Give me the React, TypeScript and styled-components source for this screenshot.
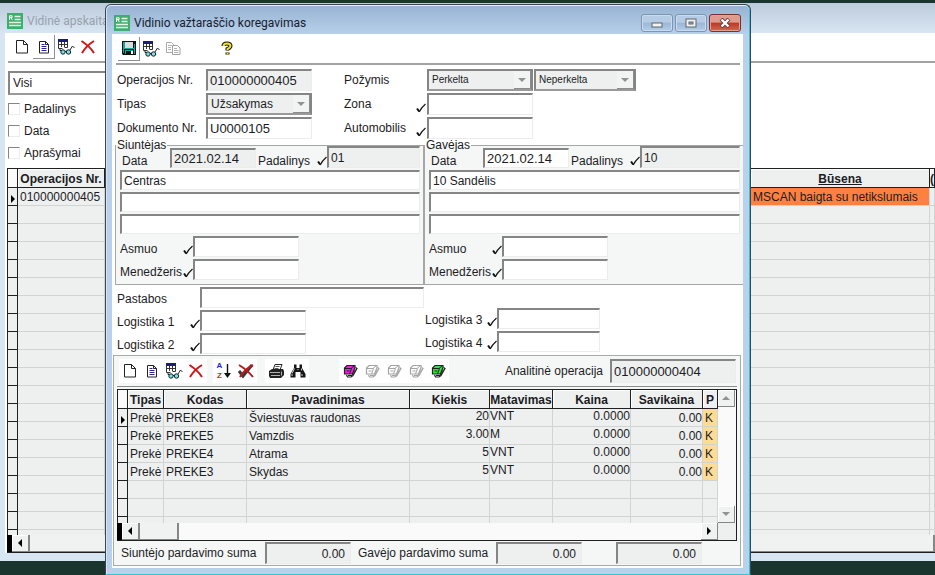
import React from "react";
import styled, { createGlobalStyle, css } from "styled-components";

const GlobalStyle = createGlobalStyle`
  *, *::before, *::after { box-sizing: border-box; }
  body {
    margin: 0;
    background: #1a352e;
    color: #1c1c24;
    font: 12px/14px "Liberation Sans", Arial, sans-serif;
  }
  button, input, select { font: inherit; color: inherit; }
`;

/* ---------- shell ---------- */

const Desktop = styled.div`
  position: relative;
  display: flex;
  flex-direction: column;
  height: 100vh;
  padding: 3px 0 14px;
  overflow: hidden;
`;

const BackWindow = styled.section`
  flex: 1;
  min-height: 0;
  display: flex;
  flex-direction: column;
  padding: 0 0 8px 5px;
  background: #d8e5f3;
`;

const FrontWindow = styled.section`
  position: absolute;
  top: 4px;
  left: 105px;
  right: 184px;
  bottom: 0;
  display: flex;
  flex-direction: column;
  padding: 0 7px 6px 6px;
  background: #b9d1ea;
  border: 1px solid #3c4650;
  border-bottom-color: #38c0dc;
  border-radius: 6px 6px 0 0;
  box-shadow: inset -1px 0 #38c0dc, inset 0 1px #e6eef7, inset 1px 0 #d6e4f2;
`;

const TitleBar = styled.header<{ $active?: boolean }>`
  display: flex;
  align-items: center;
  flex: none;
  gap: 4px;
  height: ${(p) => (p.$active ? 28 : 30)}px;
  color: ${(p) => (p.$active ? "#15202e" : "#98a2ad")};
  ${(p) =>
    p.$active
      ? css`
          margin: 1px -6px 0 -5px;
          padding: 6px 8px 0 7px;
          background: linear-gradient(#98b4d3, #b7cfe9);
          border-radius: 5px 5px 0 0;
        `
      : css`
          margin-left: -5px;
          padding: 6px 2px 0 7px;
          background: linear-gradient(#bccbdb, #d8e5f3);
        `}
`;

const Title = styled.h1`
  flex: 1;
  margin: 0;
  font: 12px/16px Roboto, "Open Sans", sans-serif;
  white-space: nowrap;
`;

const WindowButtons = styled.div`
  display: flex;
  gap: 2px;
`;

const WindowButton = styled.button<{ $close?: boolean }>`
  display: grid;
  place-items: center;
  width: 32px;
  height: 18px;
  padding: 0;
  border: 1px solid ${(p) => (p.$close ? "#7c2f2c" : "#7d95b0")};
  border-radius: 3px;
  box-shadow: inset 0 0 0 1px ${(p) => (p.$close ? "#e2a096" : "#c9dcf0")};
  background: ${(p) =>
    p.$close
      ? "linear-gradient(#df9b8e 45%, #bb3a22 50%, #cd6a50)"
      : "linear-gradient(#b6cce4 45%, #9bb7d6 50%, #b4cde8)"};
`;

const Client = styled.div`
  flex: 1;
  min-height: 0;
  display: flex;
  flex-direction: column;
  background: #fff;
`;

/* ---------- toolbars ---------- */

const Toolbar = styled.div`
  display: flex;
  align-items: center;
  flex: none;
  height: 31px;
  margin: 0 3px 0 4px;
  padding-left: 2px;
  border-bottom: 2px solid #a3a3a3;
`;

const BackToolbar = styled(Toolbar)`
  height: 30px;
  margin: 0 0 0 3px;
  padding-left: 3px;
`;

const ToolButton = styled.button<{ $raised?: boolean }>`
  display: grid;
  place-items: center;
  width: 22px;
  height: 24px;
  padding: 0;
  border: 0 solid #8f8f8f;
  border-width: ${(p) => (p.$raised ? "0 1px 1px 0" : "0")};
  background: none;
`;

const Gap = styled.span`
  width: 32px;
`;

/* ---------- controls ---------- */

const sunken = css`
  border: 1px solid #ececec;
  border-top: 2px solid #858585;
  border-left: 2px solid #858585;
`;

const Field = styled.input<{ $right?: boolean; $code?: boolean }>`
  ${sunken}
  width: 100%;
  min-width: 0;
  height: 100%;
  padding: 0 5px 0 2px;
  border-radius: 0;
  outline: 0;
  background: #fff;
  font-size: ${(p) => (p.$code ? 13 : 12)}px;
  text-align: ${(p) => (p.$right ? "right" : "left")};
  &:read-only { background: #eef0f0; }
`;

const SelectFrame = styled.span<{ $small?: boolean; $plain?: boolean }>`
  display: grid;
  grid-template-columns: 1fr 17px;
  height: 100%;
  border: 2px solid #858585;
  border-right-width: ${(p) => (p.$plain ? 0 : 2)}px;
  border-bottom-color: #9a9a9a;
  background: ${(p) => (p.$plain ? "#fff" : "#eef0f0")};
  font-size: ${(p) => (p.$small ? 10 : 12)}px;
  select {
    grid-area: 1 / 1 / 2 / 3;
    min-width: 0;
    padding: 0 3px;
    border: 0;
    appearance: none;
    background: none;
    opacity: 1;
    color: inherit;
  }
`;

const SelectArrow = styled.span`
  grid-area: 1 / 2;
  display: grid;
  place-items: center;
  border-right: 1px solid #8c8c8c;
  border-bottom: 1px solid #8c8c8c;
  background: #f2f3f3;
  pointer-events: none;
`;

const LookupButton = styled.button`
  display: grid;
  place-items: end center;
  height: 100%;
  padding: 0 0 2px;
  border: 0;
  background: none;
`;

const Label = styled.label`
  align-self: center;
  white-space: nowrap;
`;

function Tri({ dir, color = "#000" }: { dir: "up" | "down" | "left" | "right"; color?: string }) {
  const d = {
    up: "M0 6h8L4 2z",
    down: "M0 2h8L4 6z",
    left: "M6 0v8L2 4z",
    right: "M2 0v8l4-4z",
  }[dir];
  return (
    <svg width="8" height="8" viewBox="0 0 8 8" aria-hidden="true">
      <path d={d} fill={color} />
    </svg>
  );
}

function Choice({ id, value, small, label }: { id?: string; value: string; small?: boolean; label?: string }) {
  return (
    <SelectFrame $small={small}>
      <select id={id} aria-label={label} disabled defaultValue={value}>
        <option>{value}</option>
      </select>
      <SelectArrow>
        <Tri dir="down" color="#929292" />
      </SelectArrow>
    </SelectFrame>
  );
}

function Lookup({ label }: { label: string }) {
  return (
    <LookupButton type="button" aria-label={label}>
      <svg width="10" height="10" viewBox="0 0 10 10" aria-hidden="true">
        <path d="M1 5.5 3.2 8.5" stroke="#111" strokeWidth="2" fill="none" />
        <path d="M3.2 9 Q5 5 9.5 1" stroke="#111" strokeWidth="1.1" fill="none" />
      </svg>
    </LookupButton>
  );
}

/* ---------- document form ---------- */

const HeaderForm = styled.div`
  display: grid;
  grid-template-columns: 89px 106px 32px 72px 11px 106px 103px;
  grid-auto-rows: 22px;
  row-gap: 2px;
  padding: 4px 0 0 5px;
`;

const Cell = styled.div<{ $col: number; $pad?: number }>`
  grid-column: ${(p) => p.$col};
  padding-left: ${(p) => p.$pad || 0}px;
`;

const ColLabel = styled(Label)<{ $col: number }>`
  grid-column: ${(p) => p.$col};
`;

const Parties = styled.div`
  display: grid;
  grid-template-columns: 309fr 319fr;
  padding-left: 3px;
`;

const Party = styled.fieldset<{ $last?: boolean }>`
  min-width: 0;
  margin: 0;
  padding: 0 3px 4px 4px;
  border: 1px solid #a6a6a6;
  border-right-width: ${(p) => (p.$last ? 0 : 1)}px;
  background: #f5f7f7;
  legend {
    height: 12px;
    margin-left: -4px;
    padding: 0 1px;
    line-height: 12px;
  }
`;

const PartyRows = styled.div`
  display: grid;
  grid-template-rows: 22px repeat(3, 20px) 21px 21px;
  row-gap: 2px;
  margin-top: -5px;
`;

const PartyHead = styled.div<{ $lead: number }>`
  display: grid;
  grid-template-columns: ${(p) => p.$lead}px 86px 60px 11px 1fr;
  & > label { padding: 7px 0 0 2px; }
`;

const DateSlot = styled.div`
  padding-top: 2px;
`;

const PersonRow = styled.div`
  display: grid;
  grid-template-columns: 62px 11px 106px;
  label { padding-top: 4px; }
`;

const Notes = styled.div`
  display: grid;
  grid-template-columns: 308px 1fr;
  padding: 2px 0 1px 5px;
`;

const NoteColumn = styled.div<{ $end?: boolean }>`
  display: flex;
  flex-direction: column;
  justify-content: flex-end;
  gap: 2px;
  padding-bottom: ${(p) => (p.$end ? 2 : 0)}px;
`;

const NoteRow = styled.div<{ $cols: string }>`
  display: grid;
  grid-template-columns: ${(p) => p.$cols};
  height: 21px;
  label { padding-top: 2px; }
`;

/* ---------- lines panel ---------- */

const Panel = styled.div`
  flex: 1;
  min-height: 0;
  display: flex;
  flex-direction: column;
  margin: 0 2px 2px 1px;
  padding: 0 3px;
  border: 1px solid #a9a9a9;
  background: #f5f7f7;
`;

const PanelToolbar = styled.div`
  display: flex;
  align-items: center;
  flex: none;
  height: 31px;
  border-bottom: 1px solid #8c8c8c;
`;

const Strip = styled.div<{ $after: number }>`
  display: flex;
  margin: 0 ${(p) => p.$after}px 0 2px;
  background: #fff;
`;

const AnalyticField = styled.div`
  width: 126px;
  height: 24px;
  margin: 0 1px 0 7px;
`;

const Spacer = styled.span`
  flex: 1;
`;

const GridBox = styled.div`
  flex: 1;
  min-height: 0;
  display: grid;
  grid-template-columns: 1fr 18px;
  grid-template-rows: 1fr 17px;
  margin-top: 2px;
  border: solid #202020;
  border-width: 1px 1px 1px 0;
  background: #eef0f0;
`;

const Clip = styled.div`
  min-height: 0;
  min-width: 0;
  overflow: hidden;
`;

const Grid = styled.table`
  width: 100%;
  table-layout: fixed;
  border-collapse: separate;
  border-spacing: 0;
  background: #eef0f0;
  white-space: nowrap;
`;

const Row = styled.tr`
  height: 18px;
`;

const Th = styled.th<{ $underline?: boolean; $align?: string }>`
  height: 19px;
  padding: 1px 0 0;
  overflow: hidden;
  border-right: 1px solid #202020;
  border-bottom: 1px solid #202020;
  box-shadow: inset 1px 1px #fff;
  line-height: 16px;
  text-align: ${(p) => p.$align || "center"};
  text-decoration: ${(p) => (p.$underline ? "underline" : "none")};
`;

const Td = styled.td<{ $right?: boolean; $raised?: boolean; $fill?: string }>`
  height: 18px;
  padding: ${(p) => (p.$raised ? "0 0 3px" : "2px 0 1px 2px")};
  overflow: hidden;
  border-right: 1px solid #d2d4d4;
  border-bottom: 1px solid #d2d4d4;
  background: ${(p) => p.$fill || "none"};
  text-align: ${(p) => (p.$right ? "right" : "left")};
`;

const Marker = styled.td`
  height: 18px;
  padding: 4px 0 0;
  border: solid #202020;
  border-width: 0 1px 1px 1px;
  line-height: 8px;
  text-align: right;
`;

const MarkerHead = styled.th`
  padding: 0;
  border: solid #202020;
  border-width: 0 1px 1px 1px;
  background: #fafafa;
`;

const ScrollV = styled.div`
  display: flex;
  flex-direction: column;
  justify-content: space-between;
  background: #fafafa;
`;

const ScrollH = styled.div`
  grid-column: 1;
  display: flex;
  flex: none;
  height: 17px;
  border-left: 5px solid #000;
  background: #fafafa;
`;

const ScrollButton = styled.button`
  display: grid;
  place-items: center;
  flex: none;
  width: 17px;
  height: 17px;
  padding: 0;
  border: solid #868686;
  border-width: 0 1px 1px 0;
  box-shadow: inset 1px 1px #fff;
  background: #f0f1f1;
`;

const Thumb = styled.span<{ $fill?: boolean }>`
  flex: ${(p) => (p.$fill ? "1" : "0 0 40px")};
  border: solid #868686;
  border-width: 0 2px 1px 1px;
  background: #f0f1f1;
`;

const Totals = styled.div`
  display: grid;
  grid-template-columns: 144px 86px 7px 138px 86px 34px 86px;
  grid-template-rows: 22px;
  flex: none;
  height: 24px;
  padding: 1px 0 0 4px;
`;

/* ---------- back window ---------- */

const Filters = styled.div`
  display: flex;
  flex-direction: column;
  width: 220px;
  padding: 8px 0 0 3px;
`;

const FilterCombo = styled.div`
  height: 24px;
  margin-bottom: 3px;
`;

const CheckLine = styled.label`
  display: flex;
  align-items: center;
  gap: 4px;
  height: 22px;
  input {
    ${sunken}
    width: 12px;
    height: 12px;
    margin: 0;
    appearance: none;
    background: #fff;
    border-width: 1px;
  }
`;

const BackGrid = styled.div`
  flex: 1;
  min-height: 0;
  display: flex;
  flex-direction: column;
  margin: 4px 0 0 2px;
  border: solid #202020;
  border-width: 1px 0 1px;
  background: #eef0f0;
`;

const BackClip = styled(Clip)`
  flex: 1;
`;

/* ---------- icons ---------- */

function AppIcon() {
  return (
    <svg width="16" height="16" viewBox="0 0 16 16" aria-hidden="true">
      <rect width="16" height="16" fill="#3fae6b" />
      <path d="M2.5 7V2.8h2.6v1.9H2.5m1.3 0L5.4 7" stroke="#fff" fill="none" />
      <path d="M7.5 3.5h6M7.5 6.5h6M2 9.5h12M2 12.5h12" stroke="#e4f6ea" strokeWidth="1.3" />
    </svg>
  );
}

const I = ({ w = 16, children }: { w?: number; children: React.ReactNode }) => (
  <svg width={w} height="16" viewBox={`0 0 ${w} 16`} fill="none" aria-hidden="true">
    {children}
  </svg>
);

const NewIcon = () => (
  <I>
    <path d="M2.5 1.5h7l4 4v8.500h-11z" fill="#fff" stroke="#222" />
    <path d="M9.5 1.5v4h4" stroke="#222" />
  </I>
);
const ListIcon = () => (
  <I>
    <path d="M3.5 2.5h6l3 3v8.500h-9z" fill="#fff" stroke="#222" />
    <path d="M9.500 2.500v3h3" stroke="#222" />
    <path d="M5.500 5.500h3M5.500 7.500h5M5.500 9.500h5M5.500 11.500h5" stroke="#26269a" />
  </I>
);
const ViewIcon = () => (
  <I w={18}>
    <rect x="1" y="0" width="10" height="3" fill="#1c1c78" />
    <path d="M1.500 3v6.500h4M10.500 3v5.500h-3M1.500 5.500h9M4.500 3v5M7.500 3v5" stroke="#333" />
    <path d="M3 10v1.500h2" stroke="#222" />
    <circle cx="6" cy="13" r="2.200" fill="#7fe0dc" stroke="#123" />
    <circle cx="11.500" cy="13" r="2.200" fill="#7fe0dc" stroke="#123" />
    <path d="M8 12.500h1.500M13 11l2.500-4 2 2" stroke="#222" />
  </I>
);
const DeleteIcon = () => (
  <I>
    <path d="M1.500 2C6 5 11 9 14 14M14 2C9 5 5 9 2 14" stroke="#cf1518" strokeWidth="2" />
  </I>
);
const SaveIcon = () => (
  <I>
    <path d="M1 1h14v14H2l-1-1z" fill="#111" />
    <path d="M2 2h2v6H2zM13 4h1v10h-1zM2 8h11v1H2zM2 9h1v4H2z" fill="#17a6a6" />
    <rect x="4" y="2" width="8" height="6" fill="#d9dcdc" />
    <rect x="4" y="10" width="8" height="4" fill="#17a6a6" />
    <rect x="5" y="11" width="5" height="4" fill="#111" />
    <rect x="10" y="11" width="2" height="3" fill="#fff" />
  </I>
);
const CopyIcon = () => (
  <I>
    <path d="M1.500 1.500h5l2 2v8h-7z" fill="#fff" stroke="#a9a9a9" />
    <path d="M3 4.500h4M3 6.500h3M3 8.500h3" stroke="#b5b5b5" />
    <path d="M7.500 4.500h5l2.500 2.500v6.500H7.500z" fill="#fff" stroke="#a0a0a0" />
    <path d="M9 7.500h3M9 9.500h4.500M9 11.500h4.500" stroke="#b0b0b0" />
  </I>
);
const HelpIcon = () => (
  <I>
    <path d="M4.500 5Q4.500 2.500 8 2.500T11.500 5Q11.500 6.500 8.500 8V9.500M8.500 11.500v2" stroke="#111" strokeWidth="4" />
    <path d="M4.500 5.200Q4.500 2.500 8 2.500T11.500 5Q11.500 6.500 8.500 8V9M8.500 11.700v1.600" stroke="#f2e61a" strokeWidth="2" />
  </I>
);
const SortGlyph = styled.span`
  display: flex;
  align-items: center;
  font: bold 8px/10px "Liberation Sans", Arial, sans-serif;
  b { display: block; color: #2424dc; }
  b + b { color: #d81a1a; }
`;
const SortIcon = () => (
  <SortGlyph>
    <span>
      <b>A</b>
      <b>Z</b>
    </span>
    <I w={9}>
      <path d="M5.500 1v12" stroke="#111" strokeWidth="1.400" />
      <path d="M2 10h7l-3.500 5z" fill="#111" />
    </I>
  </SortGlyph>
);
const FilterOffIcon = () => (
  <I>
    <path d="M1 8l4 5L14 2" stroke="#3a3a3a" strokeWidth="3" />
    <path d="M1 2C6 5 11 9 15 14M15 2C9 5 5 9 2 14" stroke="#b81a1c" strokeWidth="2" />
  </I>
);
const PrintIcon = () => (
  <I>
    <path d="M5 7l2-5.500h7L12 7z" fill="#fff" stroke="#222" />
    <path d="M7.500 3.500h4M6.500 5.500h4" stroke="#555" />
    <path d="M1 8l3-2h11l1 2v4l-3 3H2l-1-2z" fill="#222" />
    <path d="M2 9.500h10M3 12.500h9M13.500 8.500v4" stroke="#b5b5b5" />
  </I>
);
const FindIcon = () => (
  <I>
    <path d="M4 1.500h2.500V5H9.500V1.500H12V5l3.500 6v3.500h-5V9h-5v5.500h-5V11L4 5z" fill="#151515" />
    <path d="M4.500 5.500L2 10.500M11.500 5.500v2M2 11v2M12 11v2M7.500 6.500h1" stroke="#ccc" />
  </I>
);
const BookIcon = ({ fill, line = "#222" }: { fill: string; line?: string }) => (
  <I>
    <path d="M5 2.500h8v2l-2.500 6.500h-8V5z" fill={fill} stroke={line} strokeWidth="1.200" />
    <path d="M2.500 5.500H9l3-2.500M9.500 5.500L7.500 11M4.500 8h3" stroke={line} />
    <path d="M13.500 4.500l1.500 1-4 7-2 1.500H5.500l-1-2" stroke={line} strokeWidth="1.200" />
    <path d="M6 12.500h4l3.500-6" stroke={line} />
  </I>
);

/* ---------- data ---------- */

const lines = [
  ["PREKE8", "Šviestuvas raudonas", "20", "VNT"],
  ["PREKE5", "Vamzdis", "3.00", "M"],
  ["PREKE4", "Atrama", "5", "VNT"],
  ["PREKE3", "Skydas", "5", "VNT"],
];

const grey = "#a5a5a5";

function Tool({ label, raised, children }: { label: string; raised?: boolean; children: React.ReactNode }) {
  return (
    <ToolButton type="button" aria-label={label} title={label} $raised={raised}>
      {children}
    </ToolButton>
  );
}

function PartyBox(props: {
  id: string;
  name: string;
  unit: string;
  title: string;
  lead: number;
  lockedDate?: boolean;
  last?: boolean;
}) {
  const { id, name, unit, title, lead, lockedDate, last } = props;
  return (
    <Party $last={last}>
      <legend>{name}</legend>
      <PartyRows>
        <PartyHead $lead={lead}>
          <Label htmlFor={id + "date"}>Data</Label>
          <DateSlot>
            <Field id={id + "date"} $code defaultValue="2021.02.14" readOnly={lockedDate} />
          </DateSlot>
          <Label htmlFor={id + "unit"}>Padalinys</Label>
          <Lookup label="Pasirinkti padalinį" />
          <Field id={id + "unit"} defaultValue={unit} readOnly />
        </PartyHead>
        <Field aria-label={name + " 1"} defaultValue={title} />
        <Field aria-label={name + " 2"} />
        <Field aria-label={name + " 3"} />
        {["Asmuo", "Menedžeris"].map((t) => (
          <PersonRow key={t}>
            <Label htmlFor={id + t}>{t}</Label>
            <Lookup label={t} />
            <Field id={id + t} />
          </PersonRow>
        ))}
      </PartyRows>
    </Party>
  );
}

function Logistics({ n, cols }: { n: number; cols: string }) {
  return (
    <NoteRow $cols={cols}>
      <Label htmlFor={"log" + n}>Logistika {n}</Label>
      <Lookup label={"Logistika " + n} />
      <Field id={"log" + n} />
    </NoteRow>
  );
}

function JournalWindow() {
  return (
    <BackWindow>
      <TitleBar>
        <AppIcon />
        <Title as="h2">Vidinė apskaita</Title>
      </TitleBar>
      <Client>
        <BackToolbar>
          <Tool label="Naujas"><NewIcon /></Tool>
          <Tool label="Koreguoti" raised><ListIcon /></Tool>
          <Tool label="Peržiūra"><ViewIcon /></Tool>
          <Tool label="Trinti"><DeleteIcon /></Tool>
        </BackToolbar>
        <Filters>
          <FilterCombo>
            <SelectFrame $plain>
              <select aria-label="Filtras"><option>Visi</option></select>
            </SelectFrame>
          </FilterCombo>
          <CheckLine><input type="checkbox" />Padalinys</CheckLine>
          <CheckLine><input type="checkbox" />Data</CheckLine>
          <CheckLine><input type="checkbox" />Aprašymai</CheckLine>
        </Filters>
        <BackGrid>
          <BackClip>
            <Grid>
              <colgroup>
                <col width="11" />
                <col width="87" />
                <col />
                <col width="179" />
                <col width="5" />
              </colgroup>
              <thead>
                <Row>
                  <MarkerHead />
                  <Th>Operacijos Nr.</Th>
                  <Th />
                  <Th $underline>Būsena</Th>
                  <Th $align="left">(</Th>
                </Row>
              </thead>
              <tbody>
                {Array.from({ length: 20 }, (_, i) => (
                  <Row key={i}>
                    <Marker>{i === 0 && <Tri dir="right" />}</Marker>
                    <Td>{i === 0 && "010000000405"}</Td>
                    <Td />
                    <Td $fill={i === 0 ? "#ff8040" : undefined}>{i === 0 && "MSCAN baigta su netikslumais"}</Td>
                    <Td />
                  </Row>
                ))}
              </tbody>
            </Grid>
          </BackClip>
          <ScrollH>
            <ScrollButton type="button" aria-label="Kairėn"><Tri dir="left" /></ScrollButton>
            <Thumb $fill />
          </ScrollH>
        </BackGrid>
      </Client>
    </BackWindow>
  );
}

function WaybillWindow() {
  return (
    <FrontWindow>
      <TitleBar $active>
        <AppIcon />
        <Title>Vidinio važtaraščio koregavimas</Title>
        <WindowButtons>
          <WindowButton type="button" aria-label="Sumažinti">
            <svg width="12" height="10"><rect x="1" y="5" width="10" height="4" fill="#f2f2ee" stroke="#5c6672" /></svg>
          </WindowButton>
          <WindowButton type="button" aria-label="Padidinti">
            <svg width="12" height="10">
              <rect x="1" y="1" width="10" height="8" fill="#f2f2ee" stroke="#5c6672" />
              <rect x="4" y="4" width="4" height="2" fill="#8fb0d4" stroke="#5c6672" />
            </svg>
          </WindowButton>
          <WindowButton type="button" aria-label="Uždaryti" $close>
            <svg width="12" height="10">
              <path d="M2 1l8 8M10 1L2 9" stroke="#6b3a3a" strokeWidth="4" />
              <path d="M2.500 1.500l7 7M9.500 1.500l-7 7" stroke="#fff" strokeWidth="2.400" />
            </svg>
          </WindowButton>
        </WindowButtons>
      </TitleBar>
      <Client>
        <Toolbar>
          <Tool label="Išsaugoti" raised><SaveIcon /></Tool>
          <Tool label="Peržiūra"><ViewIcon /></Tool>
          <Tool label="Kopijuoti"><CopyIcon /></Tool>
          <Gap />
          <Tool label="Pagalba"><HelpIcon /></Tool>
        </Toolbar>
        <HeaderForm>
          <ColLabel $col={1} htmlFor="op">Operacijos Nr.</ColLabel>
          <Cell $col={2}><Field id="op" $code defaultValue="010000000405" readOnly /></Cell>
          <ColLabel $col={4} htmlFor="flag">Požymis</ColLabel>
          <Cell $col={6}><Choice id="flag" value="Perkelta" small /></Cell>
          <Cell $col={7} $pad={1}><Choice label="Požymis 2" value="Neperkelta" small /></Cell>

          <ColLabel $col={1} htmlFor="type">Tipas</ColLabel>
          <Cell $col={2}><Choice id="type" value="Užsakymas" /></Cell>
          <ColLabel $col={4} htmlFor="zone">Zona</ColLabel>
          <Cell $col={5}><Lookup label="Zona" /></Cell>
          <Cell $col={6}><Field id="zone" /></Cell>

          <ColLabel $col={1} htmlFor="doc">Dokumento Nr.</ColLabel>
          <Cell $col={2}><Field id="doc" $code defaultValue="U0000105" /></Cell>
          <ColLabel $col={4} htmlFor="car">Automobilis</ColLabel>
          <Cell $col={5}><Lookup label="Automobilis" /></Cell>
          <Cell $col={6}><Field id="car" /></Cell>
        </HeaderForm>
        <Parties>
          <PartyBox id="s" name="Siuntėjas" unit="01" title="Centras" lead={50} lockedDate />
          <PartyBox id="g" name="Gavėjas" unit="10" title="10 Sandėlis" lead={54} last />
        </Parties>
        <Notes>
          <NoteColumn>
            <NoteRow $cols="83px 224px">
              <Label htmlFor="notes">Pastabos</Label>
              <Field id="notes" />
            </NoteRow>
            <Logistics n={1} cols="72px 11px 106px" />
            <Logistics n={2} cols="72px 11px 106px" />
          </NoteColumn>
          <NoteColumn $end>
            <Logistics n={3} cols="61px 11px 103px" />
            <Logistics n={4} cols="61px 11px 103px" />
          </NoteColumn>
        </Notes>
        <Panel>
          <PanelToolbar>
            <Strip $after={4}>
              <Tool label="Nauja eilutė"><NewIcon /></Tool>
              <Tool label="Koreguoti eilutę"><ListIcon /></Tool>
              <Tool label="Peržiūrėti eilutę"><ViewIcon /></Tool>
              <Tool label="Trinti eilutę"><DeleteIcon /></Tool>
            </Strip>
            <Strip $after={6}>
              <Tool label="Rūšiuoti"><SortIcon /></Tool>
              <Tool label="Nuimti filtrą"><FilterOffIcon /></Tool>
            </Strip>
            <Strip $after={28}>
              <Tool label="Spausdinti"><PrintIcon /></Tool>
              <Tool label="Ieškoti"><FindIcon /></Tool>
            </Strip>
            <Strip $after={0}>
              <Tool label="Knyga 1"><BookIcon fill="#f020e8" /></Tool>
              <Tool label="Knyga 2"><BookIcon fill="#fff" line={grey} /></Tool>
              <Tool label="Knyga 3"><BookIcon fill="#fff" line={grey} /></Tool>
              <Tool label="Knyga 4"><BookIcon fill="#fff" line={grey} /></Tool>
              <Tool label="Knyga 5"><BookIcon fill="#2ce83a" /></Tool>
            </Strip>
            <Spacer />
            <Label htmlFor="analytic">Analitinė operacija</Label>
            <AnalyticField><Field id="analytic" $code defaultValue="010000000404" readOnly /></AnalyticField>
          </PanelToolbar>
          <GridBox>
            <Clip>
              <Grid>
                <colgroup>
                  <col width="11" />
                  <col width="36" />
                  <col width="83" />
                  <col />
                  <col width="80" />
                  <col width="63" />
                  <col width="78" />
                  <col width="72" />
                  <col width="15" />
                </colgroup>
                <thead>
                  <Row>
                    <MarkerHead />
                    {["Tipas", "Kodas", "Pavadinimas", "Kiekis", "Matavimas", "Kaina", "Savikaina", "P"].map((h) => (
                      <Th key={h}>{h}</Th>
                    ))}
                  </Row>
                </thead>
                <tbody>
                  {lines.map(([code, name, qty, unit], i) => (
                    <Row key={code}>
                      <Marker>{i === 0 && <Tri dir="right" />}</Marker>
                      <Td>Prekė</Td>
                      <Td>{code}</Td>
                      <Td>{name}</Td>
                      <Td $right $raised>{qty}</Td>
                      <Td $raised>{unit}</Td>
                      <Td $right $raised>0.0000</Td>
                      <Td $right>0.00</Td>
                      <Td $fill="#ffdc96">K</Td>
                    </Row>
                  ))}
                  {[0, 1, 2].map((r) => (
                    <Row key={r}>
                      <Marker />
                      {[0, 1, 2, 3, 4, 5, 6, 7].map((c) => (
                        <Td key={c} />
                      ))}
                    </Row>
                  ))}
                </tbody>
              </Grid>
            </Clip>
            <ScrollV>
              <ScrollButton type="button" aria-label="Aukštyn"><Tri dir="up" color="#929292" /></ScrollButton>
              <ScrollButton type="button" aria-label="Žemyn"><Tri dir="down" color="#929292" /></ScrollButton>
            </ScrollV>
            <ScrollH>
              <ScrollButton type="button" aria-label="Kairėn"><Tri dir="left" /></ScrollButton>
              <Thumb />
              <Spacer />
              <ScrollButton type="button" aria-label="Dešinėn"><Tri dir="right" /></ScrollButton>
            </ScrollH>
          </GridBox>
          <Totals>
            <Label htmlFor="sum1">Siuntėjo pardavimo suma</Label>
            <Field id="sum1" $right readOnly defaultValue="0.00" />
            <Spacer />
            <Label htmlFor="sum2">Gavėjo pardavimo suma</Label>
            <Field id="sum2" $right readOnly defaultValue="0.00" />
            <Spacer />
            <Field aria-label="Bendra suma" $right readOnly defaultValue="0.00" />
          </Totals>
        </Panel>
      </Client>
    </FrontWindow>
  );
}

export default function App() {
  return (
    <>
      <GlobalStyle />
      <Desktop>
        <JournalWindow />
        <WaybillWindow />
      </Desktop>
    </>
  );
}
